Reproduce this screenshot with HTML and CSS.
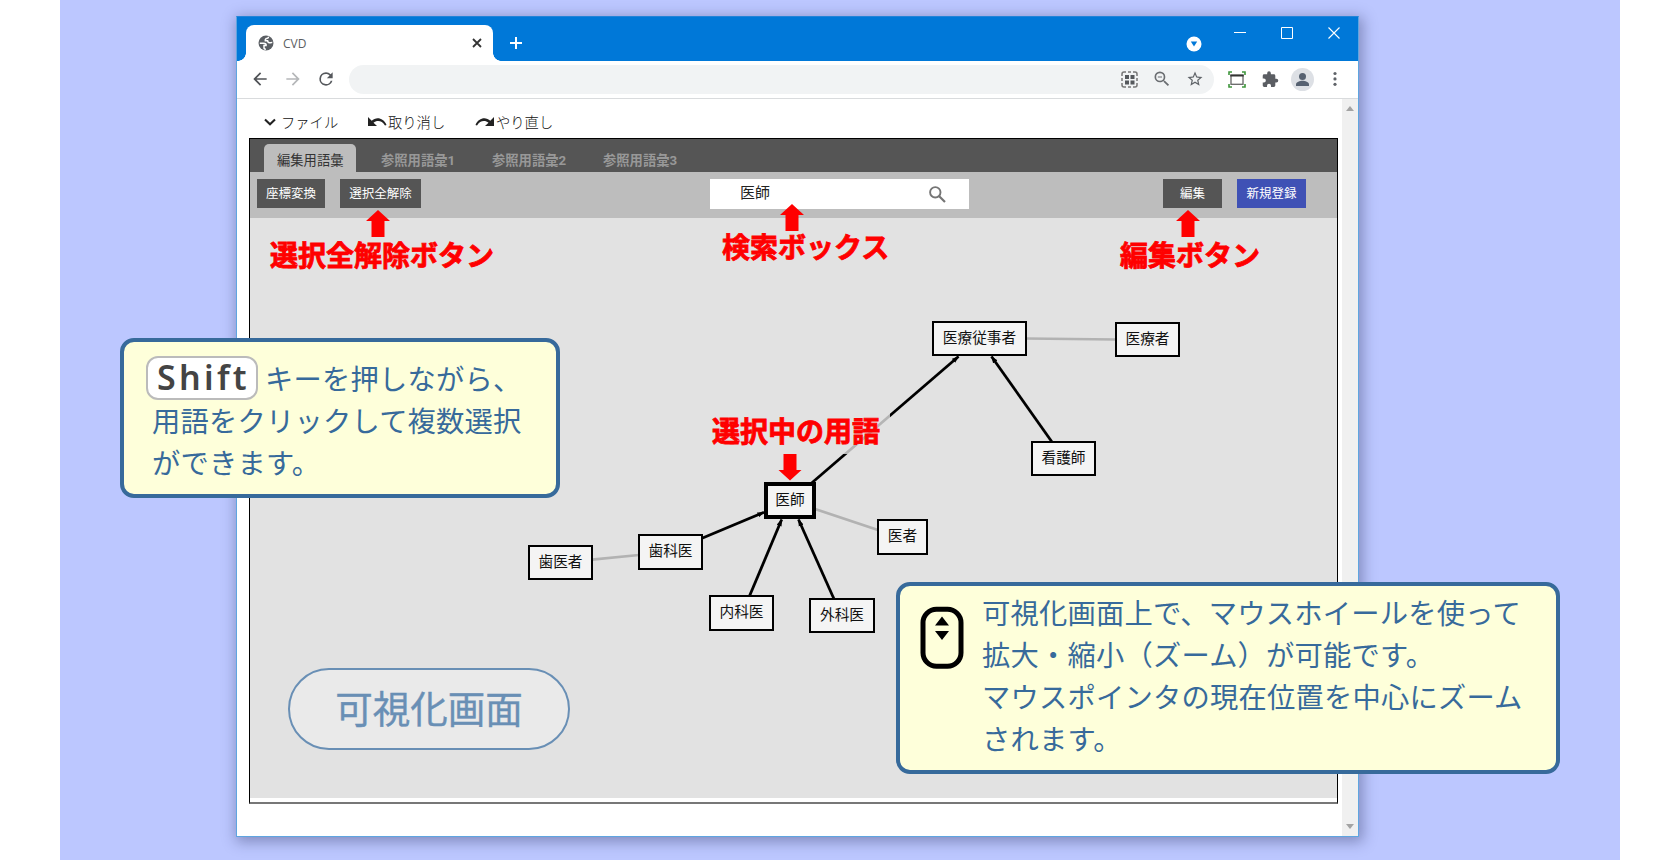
FILE: index.html
```html
<!DOCTYPE html>
<html lang="ja">
<head>
<meta charset="utf-8">
<title>CVD</title>
<link rel="stylesheet" href="styles.css">
</head>
<body>
<main class="stage">
  <section class="window">
    <header class="titlebar">
      <div class="browser-tab">
        <svg class="favicon" width="16" height="16" viewBox="0 0 16 16"><circle cx="8" cy="8" r="7.500" fill="#5a5e63"/><path d="M1.800 8.300h3.700c2 0 2.900.9 2.600 2.300H6v2.200c0 .9.700 1.500 1.900 1.500" fill="none" stroke="#fff" stroke-width="1.500"/><path d="M10.500 1.600c.1 1-.3 1.500-1.200 1.700-1.600.2-2.300 1.100-2 2.500h2.300c.2 1.500 1.200 2.200 2.700 2 .8-.1 1.200-.5 2-.3" fill="none" stroke="#fff" stroke-width="1.500"/></svg>
        <span class="tab-title">CVD</span>
        <svg class="tab-close" width="10" height="10" viewBox="0 0 10 10"><path d="M1 1l8 8M9 1l-8 8" stroke="#333" stroke-width="1.800"/></svg>
      </div>
      <svg class="new-tab" width="14" height="14" viewBox="0 0 14 14"><path d="M7 1v12M1 7h12" stroke="#fff" stroke-width="2"/></svg>
      <svg class="tab-search" width="16" height="16" viewBox="0 0 16 16"><circle cx="8" cy="8" r="7.500" fill="#fff"/><path d="M4.800 5.500h6.400L8 10.500z" fill="#0078d8"/></svg>
      <div class="window-buttons">
        <svg width="12" height="12" viewBox="0 0 12 12"><path d="M0 5.500h12" stroke="#fff"/></svg>
        <svg width="12" height="12" viewBox="0 0 12 12"><path d="M.5.5h11v11H.5z" fill="none" stroke="#fff"/></svg>
        <svg width="12" height="12" viewBox="0 0 12 12"><path d="M.5.5l11 11M11.500.5l-11 11" stroke="#fff" stroke-width="1.100"/></svg>
      </div>
    </header>

    <nav class="toolbar">
      <svg class="nav-icon" width="20" height="20" viewBox="0 0 24 24"><path fill="#505357" d="M20 11H7.830l5.590-5.590L12 4l-8 8 8 8 1.410-1.410L7.830 13H20z"/></svg>
      <svg class="nav-icon" width="20" height="20" viewBox="0 0 24 24"><path fill="#b5b7b9" d="M12 4l-1.410 1.410L16.170 11H4v2h12.170l-5.580 5.590L12 20l8-8z"/></svg>
      <svg class="nav-icon" width="20" height="20" viewBox="0 0 24 24"><path fill="#55585c" d="M17.650 6.350A7.958 7.958 0 0 0 12 4a8 8 0 1 0 7.730 10h-2.080A6 6 0 1 1 12 6c1.660 0 3.140.690 4.220 1.780L13 11h7V4z"/></svg>
      <div class="omnibox">
        <svg width="17" height="17" viewBox="0 0 17 17"><path d="M1 5V3q0-2 2-2h2M7 1h3M12 1h2q2 0 2 2v2M16 7v3M16 12v2q0 2-2 2h-2M10 16H7M5 16H3q-2 0-2-2v-2M1 10V7" fill="none" stroke="#777" stroke-width="1.500"/><path d="M4 4h4v4H4zM9.500 4h4v4h-4zM4 9.500h4v4H4zM9.500 9.500h4v4h-4z" fill="#55585c"/></svg>
        <svg width="20" height="20" viewBox="0 0 24 24"><path fill="#6a6d71" d="M15.500 14h-.790l-.280-.270A6.471 6.471 0 0 0 16 9.500 6.500 6.500 0 1 0 9.500 16c1.610 0 3.090-.590 4.230-1.570l.270.280v.790l5 4.990L20.490 19zm-6 0a4.500 4.500 0 1 1 0-9 4.500 4.500 0 0 1 0 9zM7 9h5v1.200H7z"/></svg>
        <svg width="18" height="18" viewBox="0 0 24 24"><path fill="#5f6368" d="M22 9.240l-7.190-.620L12 2 9.190 8.630 2 9.240l5.460 4.730L5.820 21 12 17.270 18.180 21l-1.630-7.030zM12 15.400l-3.760 2.270 1-4.280-3.320-2.880 4.380-.380L12 6.100l1.710 4.040 4.380.380-3.320 2.880 1 4.280z"/></svg>
      </div>
      <div class="extensions">
        <svg width="18" height="17" viewBox="0 0 18 17"><rect x="3" y="4.300" width="12" height="9" fill="#fff" stroke="#666" stroke-width="1.300"/><path d="M2.300 4.500h13.400" stroke="#333" stroke-width="2"/><path d="M1 4V1h3M14 1h3v3M17 13v3h-3M4 16H1v-3" fill="none" stroke="#3f963c" stroke-width="1.600"/></svg>
        <svg class="puzzle" width="17" height="17" viewBox="1 1 23 22"><path fill="#5b5e63" d="M20.500 11H19V7a2 2 0 0 0-2-2h-4V3.500a2.500 2.500 0 0 0-5 0V5H4a2 2 0 0 0-2 2v3.800h1.500a2.700 2.700 0 0 1 0 5.400H2V20a2 2 0 0 0 2 2h3.800v-1.500a2.700 2.700 0 0 1 5.400 0V22H17a2 2 0 0 0 2-2v-4h1.500a2.500 2.500 0 0 0 0-5z"/></svg>
        <svg class="avatar" width="23" height="23" viewBox="0 0 23 23"><circle cx="11.500" cy="11.500" r="11.500" fill="#dde0e5"/><circle cx="11.500" cy="8.500" r="3.500" fill="#566171"/><path d="M5 18v-1.800c0-2.300 4-3.500 6.500-3.500s6.500 1.200 6.500 3.500V18z" fill="#566171"/></svg>
        <svg class="more" width="6" height="16" viewBox="0 0 6 16"><g fill="#5f6368"><circle cx="3" cy="2.500" r="1.600"/><circle cx="3" cy="7.900" r="1.600"/><circle cx="3" cy="13.300" r="1.600"/></g></svg>
      </div>
    </nav>

    <div class="viewport">
      <div class="document">
        <div class="menu">
          <span class="menu-item file"><svg width="12" height="8" viewBox="0 0 12 8"><path d="M1 1.500l5 4.700 5-4.700" fill="none" stroke="#222" stroke-width="2.100"/></svg>ファイル</span>
          <span class="menu-item undo"><svg width="20" height="11" viewBox="0 0 20 11"><path d="M1 1v9h9L6.500 6.700C9.500 4.200 15 4 18 9.500l1.500-.6C16.500 1.500 9 .5 4.700 4.700z" fill="#222"/></svg>取り消し</span>
          <span class="menu-item redo"><svg width="20" height="11" viewBox="0 0 20 11"><path d="M19 1v9h-9l3.500-3.300C10.500 4.200 5 4 2 9.500L.5 8.900C3.500 1.500 11 .5 15.300 4.700z" fill="#222"/></svg>やり直し</span>
        </div>

        <div class="app">
          <div class="tabs">
            <span class="tab active">編集用語彙</span>
            <span class="tab">参照用語彙1</span>
            <span class="tab">参照用語彙2</span>
            <span class="tab">参照用語彙3</span>
          </div>
          <div class="actions">
            <span class="button convert">座標変換</span>
            <span class="button clear">選択全解除</span>
            <div class="search"><span>医師</span>
              <svg width="17" height="17" viewBox="0 0 17 17"><circle cx="6.300" cy="6.300" r="5.200" fill="none" stroke="#757575" stroke-width="1.900"/><path d="M10 10l6 6" stroke="#757575" stroke-width="2.200"/></svg>
            </div>
            <span class="button edit">編集</span>
            <span class="button primary">新規登録</span>
          </div>
          <div class="canvas"></div>
        </div>
      </div>
      <div class="scrollbar">
        <svg width="8" height="5" viewBox="0 0 8 5"><path d="M0 5l4-5 4 5z" fill="#a3a3a3"/></svg>
        <svg width="8" height="5" viewBox="0 0 8 5"><path d="M0 0l4 5 4-5z" fill="#a3a3a3"/></svg>
      </div>
    </div>
  </section>
</main>

<div class="overlay">
  <svg class="edges" width="1680" height="860" viewBox="0 0 1680 860">
    <defs><marker id="tip" viewBox="0 0 8 6" refX="7.500" refY="3" markerWidth="7" markerHeight="6" markerUnits="userSpaceOnUse" orient="auto"><path d="M0 0l8 3-8 3z"/></marker></defs>
    <g stroke="#b2b2b2" stroke-width="2.700">
      <path d="M1026 338.500l90 1"/><path d="M815 509l63 21"/><path d="M592 559.600l47-4.600"/>
    </g>
    <g stroke="#000" stroke-width="2.800">
      <path d="M810.500 484L958.500 356.500" marker-end="url(#tip)"/>
      <path d="M1052 442L991.500 356.500" marker-end="url(#tip)"/>
      <path d="M702 538.300l62-26" marker-end="url(#tip)"/>
      <path d="M749.300 596.500l32.400-77" marker-end="url(#tip)"/>
      <path d="M834 599l-35.500-79.500" marker-end="url(#tip)"/>
    </g>
  </svg>

  <span class="node n-worker">医療従事者</span>
  <span class="node n-medic">医療者</span>
  <span class="node n-nurse">看護師</span>
  <span class="node n-doctor">医師</span>
  <span class="node n-physician">医者</span>
  <span class="node n-dental">歯科医</span>
  <span class="node n-dentist">歯医者</span>
  <span class="node n-internal">内科医</span>
  <span class="node n-surgeon">外科医</span>

  <span class="note on-clear">選択全解除ボタン</span>
  <span class="note on-search">検索ボックス</span>
  <span class="note on-edit">編集ボタン</span>
  <span class="note on-term">選択中の用語</span>
  <svg class="arrow a-clear" width="24" height="27" viewBox="0 0 24 27"><path d="M12 0l12 11h-5.500v16h-13V11H0z"/></svg>
  <svg class="arrow a-search" width="24" height="27" viewBox="0 0 24 27"><path d="M12 0l12 11h-5.500v16h-13V11H0z"/></svg>
  <svg class="arrow a-edit" width="24" height="27" viewBox="0 0 24 27"><path d="M12 0l12 11h-5.500v16h-13V11H0z"/></svg>
  <svg class="arrow a-term" width="24" height="27" viewBox="0 0 24 27"><path d="M12 26.500L23.500 16h-5V0h-13v16H.5z"/></svg>

  <div class="pill">可視化画面</div>

  <div class="callout shift-tip">
    <div class="key-line"><kbd>Shift</kbd><span>キーを押しながら、</span></div>
    <div>用語をクリックして複数選択<br>ができます。</div>
  </div>

  <div class="callout zoom-tip">
    <svg class="mouse" width="44" height="64" viewBox="0 0 44 64"><rect x="3" y="3.200" width="38" height="57" rx="13.500" fill="none" stroke="#000" stroke-width="5"/><path d="M22 10.500l7 9H15zM22 34l7-9H15z"/></svg>
    <div>可視化画面上で、マウスホイールを使って<br>拡大・縮小（ズーム）が可能です。<br>マウスポインタの現在位置を中心にズーム<br>されます。</div>
  </div>
</div>
</body>
</html>
```
FILE: styles.css
```css
* { box-sizing: border-box; }
body {
  margin: 0;
  background: #fff;
  font-family: "Noto Sans CJK JP", sans-serif;
  overflow: hidden;
}
svg { display: block; flex: none; }
.stage {
  width: 1560px;
  height: 860px;
  margin: 0 auto;
  padding: 16px 0 0 176px;
  background: #bcc7ff;
}
.window {
  display: flex;
  flex-direction: column;
  width: 1123px;
  height: 821px;
  border: 1px solid #5fa5e0;
  border-top-color: #2384d8;
  background: #fff;
  box-shadow: 2px 3px 13px 2px rgba(30, 35, 80, .36);
}

/* Browser chrome */
.titlebar {
  display: flex;
  height: 44px;
  flex: none;
  padding-left: 9px;
  background: #0078d8;
}
.browser-tab {
  position: relative;
  display: flex;
  align-items: center;
  width: 247px;
  margin-top: 8px;
  padding: 0 11px 0 12px;
  border-radius: 8px 8px 0 0;
  background: #fff;
}
.browser-tab::before,
.browser-tab::after {
  content: "";
  position: absolute;
  bottom: 0;
  width: 8px;
  height: 8px;
}
.browser-tab::before { left: -8px; background: radial-gradient(circle at 0 0, #0078d8 7.500px, #fff 8px); }
.browser-tab::after { right: -8px; background: radial-gradient(circle at 100% 0, #0078d8 7.500px, #fff 8px); }
.tab-title {
  margin-left: 9px;
  padding-top: 2px;
  font: 12px/18px "Open Sans", sans-serif;
  color: #5b5e62;
}
.tab-close { margin-left: auto; }
.new-tab { margin: 19px 0 0 16px; }
.tab-search { margin: 19px 0 0 auto; }
.window-buttons {
  display: flex;
  gap: 35px;
  margin: 10px 18px 0 32px;
}
.toolbar {
  display: flex;
  align-items: center;
  height: 38px;
  flex: none;
  padding: 0 0 1px 13px;
  border-bottom: 1px solid #d9dbdd;
}
.nav-icon { margin-right: 13px; }
.omnibox {
  display: flex;
  align-items: center;
  justify-content: flex-end;
  gap: 14px;
  width: 865px;
  height: 29px;
  padding-right: 10px;
  border-radius: 15px;
  background: #f1f3f4;
}
.extensions {
  display: flex;
  align-items: center;
  padding-left: 14px;
}
.puzzle { margin-left: 16px; }
.avatar { margin-left: 12px; }
.more { margin-left: 18px; }

.viewport { display: flex; flex: 1; }
.document { flex: 1; padding-left: 12px; }
.scrollbar {
  display: flex;
  flex-direction: column;
  justify-content: space-between;
  align-items: center;
  width: 16px;
  padding: 7px 0;
  background: #f0f0f0;
}

/* Application */
.menu {
  display: flex;
  height: 39px;
  padding: 8px 0 2px 15px;
  font-size: 14.300px;
  line-height: 26px;
  font-weight: 300;
  color: #111;
}
.menu-item { display: flex; align-items: center; }
.file { gap: 5px; width: 103px; }
.undo { width: 108px; }
.undo, .redo { gap: 1px; }
.app {
  display: flex;
  flex-direction: column;
  width: 1089px;
  height: 666px;
  border: 1px solid #000;
  border-bottom: 2px solid #777;
}
.tabs {
  display: flex;
  align-items: flex-end;
  height: 33px;
  padding-left: 14px;
  background: #555;
}
.tab {
  width: 111px;
  height: 28px;
  padding-left: 25px;
  font-family: Roboto, "Noto Sans CJK JP", sans-serif;
  font-size: 13.300px;
  line-height: 33px;
  font-weight: 700;
  white-space: nowrap;
  color: #989898;
}
.tab.active {
  width: 92px;
  padding-left: 13px;
  border-radius: 5px 5px 0 0;
  background: #bdbdbd;
  color: #333;
  font-weight: 400;
}
.actions {
  display: flex;
  align-items: flex-start;
  height: 46px;
  padding: 7px 31px 0 7px;
  background: #bdbdbd;
}
.button {
  height: 29px;
  background: #555;
  font-size: 12.500px;
  line-height: 28px;
  text-align: center;
  white-space: nowrap;
  color: #fff;
}
.convert { width: 68px; margin-right: 15px; }
.clear { width: 81px; }
.edit { width: 59px; margin: 0 15px 0 auto; }
.primary { width: 69px; background: #3f51b5; }
.search {
  display: flex;
  align-items: center;
  justify-content: space-between;
  width: 259px;
  height: 30px;
  margin-left: 289px;
  padding: 0 23px 0 30px;
  background: #fff;
  font-size: 15px;
  line-height: 28px;
  color: #222;
}
.search span { padding-bottom: 4px; }
.canvas {
  flex: 1;
  margin-bottom: 4px;
  background: #e2e2e2;
}

/* Diagram and annotations float over the browser window */
.overlay {
  position: absolute;
  top: 0;
  left: 0;
  width: 1680px;
  height: 860px;
}
.edges { position: absolute; top: 0; left: 0; }
.node {
  position: absolute;
  width: 65px;
  height: 35px;
  border: 2px solid #000;
  background: #f4f4f4;
  font-size: 14.700px;
  line-height: 27px;
  text-align: center;
  white-space: nowrap;
  color: #111;
}
.n-worker { left: 932px; top: 321px; width: 95px; }
.n-medic { left: 1115px; top: 322px; }
.n-nurse { left: 1031px; top: 441px; }
.n-doctor { left: 764px; top: 482px; width: 52px; height: 37px; border: 4px solid #000; line-height: 26px; }
.n-physician { left: 877px; top: 519px; width: 51px; height: 36px; }
.n-dental { left: 638px; top: 534px; height: 36px; }
.n-dentist { left: 528px; top: 545px; }
.n-internal { left: 709px; top: 595px; height: 36px; }
.n-surgeon { left: 809px; top: 598px; width: 66px; }

.note {
  position: absolute;
  font-size: 28px;
  line-height: 40px;
  font-weight: 700;
  -webkit-text-stroke: .8px #f00;
  white-space: nowrap;
  color: #f00;
}
.on-clear { left: 270px; top: 234px; }
.on-search { left: 722px; top: 226px; }
.on-edit { left: 1120px; top: 234px; }
.on-term {
  left: 702px;
  top: 410px;
  width: 188px;
  height: 44px;
  padding-left: 10px;
  background: rgba(226, 226, 226, .8);
}
.arrow { position: absolute; fill: #f00; }
.a-clear { left: 366px; top: 210px; }
.a-search { left: 780px; top: 204px; }
.a-edit { left: 1176px; top: 210px; }
.a-term { left: 778px; top: 454px; }

.pill {
  position: absolute;
  left: 288px;
  top: 668px;
  width: 282px;
  height: 82px;
  border: 2px solid #698fb5;
  border-radius: 41px;
  background: #eaeaea;
  font-size: 37.500px;
  line-height: 73px;
  text-align: center;
  -webkit-text-stroke: .4px #698fb5;
  color: #698fb5;
}
.callout {
  position: absolute;
  border: 4px solid #376a9b;
  border-radius: 14px;
  background: #feffda;
  font-size: 28.300px;
  line-height: 42px;
  letter-spacing: .2px;
  white-space: nowrap;
  color: #376a9b;
}
.shift-tip {
  left: 120px;
  top: 338px;
  width: 440px;
  height: 160px;
  padding: 14px 0 0 28px;
}
.key-line { display: flex; height: 44px; margin-left: -6px; }
.key-line span { margin-left: 7px; line-height: 44px; }
.shift-tip > div + div { margin-top: -1px; }
kbd {
  width: 112px;
  height: 44px;
  padding-left: 9px;
  border: 2px solid #bbb;
  border-radius: 12px;
  background: #fff;
  font: 600 34px/39px "Noto Sans", sans-serif;
  letter-spacing: 3.300px;
  color: #444;
}
.zoom-tip {
  display: flex;
  gap: 18px;
  left: 896px;
  top: 582px;
  width: 664px;
  height: 192px;
  padding: 5px 0 0 20px;
}
.mouse { margin-top: 15px; }
```
